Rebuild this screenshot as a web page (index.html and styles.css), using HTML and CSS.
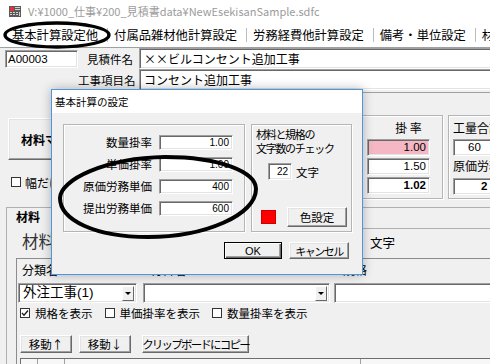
FILE: index.html
```html
<!DOCTYPE html>
<html lang="ja">
<head>
<meta charset="utf-8">
<title>NewEsekisanSample</title>
<link rel="stylesheet" href="styles.css">
</head>
<body>
<div class="titlebar">
  <svg class="appicon" width="12" height="11" viewBox="0 0 12 11">
    <rect x="0" y="0" width="12" height="11" fill="#5a5a5a"/>
    <rect x="1" y="1" width="4" height="4" fill="#e8303a"/>
    <rect x="6" y="1" width="5" height="1" fill="#d0d0d0"/>
    <rect x="6" y="3" width="5" height="1" fill="#d0d0d0"/>
    <rect x="1" y="6" width="2" height="1" fill="#d0d0d0"/>
    <rect x="4" y="6" width="2" height="1" fill="#d0d0d0"/>
    <rect x="7" y="6" width="2" height="1" fill="#d0d0d0"/>
    <rect x="1" y="8" width="2" height="1" fill="#d0d0d0"/>
    <rect x="4" y="8" width="2" height="1" fill="#d0d0d0"/>
    <rect x="7" y="8" width="2" height="1" fill="#d0d0d0"/>
    <rect x="10" y="6" width="1" height="4" fill="#d0d0d0"/>
  </svg>
  <span class="wtitle">V:¥1000_仕事¥200_見積書data¥NewEsekisanSample.sdfc</span>
</div>

<div class="menu">
  <span class="mi">基本計算設定他</span><span class="sep"></span>
  <span class="mi">付属品雑材他計算設定</span><span class="sep"></span>
  <span class="mi">労務経費他計算設定</span><span class="sep"></span>
  <span class="mi">備考・単位設定</span><span class="sep"></span>
  <span class="mi">材料</span>
</div>

<div class="hdr">
  <div class="hrow">
    <div class="tb code">A00003</div>
    <span class="hlbl">見積件名</span>
    <div class="tb wide">××ビルコンセント追加工事</div>
  </div>
  <div class="hrow">
    <div class="code-sp"></div>
    <span class="hlbl">工事項目名</span>
    <div class="tb wide">コンセント追加工事</div>
  </div>
</div>

<div class="top">
  <div class="leftcol">
    <div class="b3d bigbtn">材料マスタ編集</div>
    <div class="chkrow"><span class="cb"></span>幅だけ表示</div>
  </div>
  <div class="frame">
    <div class="grp rate">
      <div class="gtitle">掛 率</div>
      <div class="tb rval first pink">1.00</div>
      <div class="tb rval">1.50</div>
      <div class="tb rval bold">1.02</div>
    </div>
    <div class="grp labor">
      <div class="gtitle">工量合計</div>
      <div class="tb lval first">60</div>
      <div class="lcap">原価労務単価</div>
      <div class="tb lval bold lv2">2</div>
    </div>
  </div>
</div>

<div class="matpanel">
  <div class="mattitle">材料</div>
  <div class="matrow">
    <span class="biglbl">材料</span>
    <div class="charbox">文字</div>
  </div>
  <div class="listbox">
    <div class="colhdr"><span class="h1">分類名</span><span class="h2">材料名</span><span class="h3">規格</span></div>
    <div class="combos">
      <div class="tb combo c1"><span class="ctext">外注工事(1)</span><span class="arrow"></span></div>
      <div class="tb combo c2"><span class="arrow"></span></div>
      <div class="tb c3"></div>
    </div>
    <div class="checks">
      <span class="ck"><span class="cb on"><svg width="8" height="8" viewBox="0 0 8 8"><path d="M1 4 L3 6.2 L7 1.5" fill="none" stroke="#222" stroke-width="1.4"/></svg></span>規格を表示</span>
      <span class="ck"><span class="cb"></span>単価掛率を表示</span>
      <span class="ck"><span class="cb"></span>数量掛率を表示</span>
    </div>
    <div class="btns">
      <div class="b3d mv1">移動↑</div>
      <div class="b3d mv2">移動↓</div>
      <div class="b3d clip">クリップボードにコピー</div>
    </div>
    <div class="grid"><span class="gc g1"></span><span class="gc g2"></span><span class="gc g3"></span><span class="gc g4"></span></div>
  </div>
</div>

<div class="dlg">
  <div class="dtitle">基本計算の設定</div>
  <div class="dbody">
    <div class="dgroups">
      <div class="grp dg1">
        <span class="dl">数量掛率</span><div class="tb dv">1.00</div>
        <span class="dl">単価掛率</span><div class="tb dv">1.00</div>
        <span class="dl">原価労務単価</span><div class="tb dv">400</div>
        <span class="dl">提出労務単価</span><div class="tb dv">600</div>
      </div>
      <div class="grp dg2">
        <div class="chkcap"><span class="capline">材料と規格の</span><span class="capline">文字数のチェック</span></div>
        <div class="lenrow"><div class="tb lenv">22</div><span class="lenlbl">文字</span></div>
        <div class="colrow"><span class="swatch"></span><div class="b3d colbtn">色設定</div></div>
      </div>
    </div>
    <div class="dbtns">
      <div class="b3d def okb">OK</div>
      <div class="b3d canb">キャンセル</div>
    </div>
  </div>
</div>

<svg class="marks" width="490" height="364" viewBox="0 0 490 364">
  <ellipse cx="57" cy="35" rx="52" ry="12" fill="none" stroke="#000" stroke-width="3.3"/>
  <path d="M60,198 C60,180 105,158 165,157 C220,157 256,172 256,189 C256,215 205,237 148,237 C95,237 60,220 60,198 Z" fill="none" stroke="#000" stroke-width="4"/>
</svg>
</body>
</html>
```

FILE: styles.css
```css
* { box-sizing: border-box; }
html, body { margin: 0; padding: 0; }
body {
  width: 490px;
  height: 364px;
  overflow: hidden;
  position: relative;
  background: #f0f0f0;
  font-family: "Noto Sans CJK JP", sans-serif;
  font-size: 12px;
  color: #000;
}

/* window title */
.titlebar {
  height: 22px;
  background: #fff;
  display: flex;
  align-items: center;
  padding-left: 9px;
}
.appicon { flex: none; }
.wtitle {
  margin-left: 7px;
  font-size: 11px;
  color: #9b9b9b;
  white-space: nowrap;
}

/* menu strip */
.menu {
  height: 26px;
  background: #fff;
  border-bottom: 1px solid #a0a0a0;
  display: flex;
  align-items: center;
  padding-left: 12px;
  white-space: nowrap;
  font-size: 12.3px;
}
.sep {
  flex: none;
  width: 1px;
  height: 14px;
  background: #bcbcbc;
  margin: 0 6px 0 9px;
}

/* sunken text box */
.tb {
  background: #fff;
  border: 1px solid;
  border-color: #a0a0a0 #fff #fff #a0a0a0;
  box-shadow: inset 1px 1px #696969, inset -1px -1px #e3e3e3;
  white-space: nowrap;
  overflow: hidden;
}

/* raised classic button */
.b3d {
  background: #f0f0f0;
  border: 1px solid;
  border-color: #fff #696969 #696969 #fff;
  box-shadow: inset -1px -1px #a0a0a0, inset 1px 1px #e3e3e3;
  display: flex;
  align-items: center;
  justify-content: center;
  white-space: nowrap;
  font-size: 11.5px;
}
.def {
  border-color: #000;
  box-shadow: inset 1px 1px #fff, inset -1px -1px #696969, inset -2px -2px #a0a0a0;
}

/* header fields */
.hrow { display: flex; align-items: center; height: 21px; }
.code {
  width: 73px;
  height: 18px;
  margin-left: 5px;
  font-family: "Liberation Sans", sans-serif;
  font-size: 11.5px;
  line-height: 16px;
  padding-left: 2px;
}
.code-sp { width: 73px; margin-left: 5px; flex: none; }
.hlbl {
  width: 55px;
  flex: none;
  text-align: right;
  font-size: 11.5px;
  margin-right: 6px;
  white-space: nowrap;
}
.wide {
  flex: 1;
  height: 21px;
  margin-right: -20px;
  font-size: 12px;
  line-height: 19px;
  padding-left: 4px;
}

/* upper area */
.top { display: flex; height: 110px; }
.leftcol { width: 140px; flex: none; padding: 28px 0 0 8px; }
.bigbtn {
  width: 130px;
  height: 42px;
  font-weight: bold;
  font-size: 12px;
  justify-content: flex-start;
  padding-left: 12px;
}
.chkrow {
  display: flex;
  align-items: center;
  gap: 4px;
  margin: 17px 0 0 3px;
  height: 10px;
  font-size: 12px;
  white-space: nowrap;
}
.cb {
  width: 10px;
  height: 10px;
  flex: none;
  background: #fff;
  border: 1px solid #333;
  display: flex;
  align-items: center;
  justify-content: center;
}

.frame {
  flex: 1;
  min-width: 0;
  margin-top: 2px;
  border-top: 1px solid #a0a0a0;
  padding-top: 22px;
  display: flex;
  align-items: flex-start;
}
.grp {
  border: 1px solid #b5b5b5;
  box-shadow: inset 1px 1px #fff, 1px 1px #fff;
}
.gtitle { font-size: 12px; line-height: 14px; white-space: nowrap; }
.rate {
  flex: none;
  width: 85px;
  height: 84px;
  margin-left: 218px;
  padding: 5px 0 0 8px;
}
.rate .gtitle { text-align: center; padding-left: 8px; }
.rval {
  width: 63px;
  height: 17px;
  margin-top: 2px;
  text-align: right;
  padding-right: 3px;
  font-family: "Liberation Sans", sans-serif;
  font-size: 11.5px;
  line-height: 15px;
}
.first { margin-top: 4px; }
.pink { background: #f5b7c3; }
.bold { font-weight: bold; }
.labor {
  flex: none;
  width: 70px;
  height: 84px;
  margin-left: 5px;
  padding: 5px 0 0 4px;
}
.lval {
  width: 70px;
  height: 17px;
  padding-left: 14px;
  font-family: "Liberation Sans", sans-serif;
  font-size: 11.5px;
  line-height: 15px;
}
.lval.first { margin-top: 4px; }
.lv2 { padding-left: 27px; }
.lcap { font-size: 12px; line-height: 16px; margin: 2px 0 4px; white-space: nowrap; }

/* material panel */
.matpanel {
  margin: 7px 0 0 6px;
  border-top: 1px solid #b0b0b0;
  border-left: 1px solid #b0b0b0;
  padding-left: 9px;
  height: 200px;
}
.mattitle { font-weight: bold; font-size: 12px; line-height: 14px; margin-top: 2px; }
.matrow { display: flex; height: 34px; }
.biglbl {
  flex: none;
  width: 148px;
  margin-left: 6px;
  font-size: 16.5px;
  line-height: 34px;
  color: #333;
}
.charbox {
  flex: 1;
  margin-top: 4px;
  border-top: 1px solid #b0b0b0;
  padding-left: 200px;
  font-size: 12.5px;
  line-height: 28px;
  white-space: nowrap;
}
.listbox {
  border-top: 1px solid #8c8c8c;
  border-left: 1px solid #8c8c8c;
  height: 120px;
}
.colhdr {
  display: flex;
  height: 24px;
  padding: 2px 0 0 5px;
  font-size: 12px;
  line-height: 18px;
  white-space: nowrap;
}
.h1 { width: 128px; flex: none; }
.h2 { width: 193px; flex: none; }
.combos { display: flex; height: 20px; }
.combo { height: 20px; display: flex; align-items: center; flex: none; }
.c1 {
  width: 119px;
  margin-left: 1px;
  padding-left: 4px;
  font-family: "Liberation Sans", "Noto Sans CJK JP", sans-serif;
  font-size: 13.5px;
}
.c2 { width: 187px; margin-left: 6px; }
.c3 { flex: 1; height: 20px; margin-left: 4px; margin-right: -20px; }
.ctext { line-height: 18px; }
.arrow {
  margin-left: auto;
  margin-right: 2px;
  width: 12px;
  height: 15px;
  flex: none;
  background: #f0f0f0;
  border: 1px solid;
  border-color: #fff #696969 #696969 #fff;
  display: flex;
  align-items: center;
  justify-content: center;
}
.arrow::after {
  content: "";
  border-left: 3px solid transparent;
  border-right: 3px solid transparent;
  border-top: 3px solid #000;
}
.checks {
  display: flex;
  align-items: center;
  height: 12px;
  margin-top: 4px;
  padding-left: 3px;
  font-size: 11.5px;
  white-space: nowrap;
}
.ck { display: flex; align-items: center; gap: 5px; margin-right: 12px; }
.btns { display: flex; height: 18px; margin-top: 16px; padding-left: 3px; }
.btns .b3d { height: 18px; flex: none; font-size: 11.5px; }
.mv1 { width: 52px; }
.mv2 { width: 52px; margin-left: 7px; }
.clip { width: 107px; margin-left: 11px; font-size: 11px; letter-spacing: -1.8px; }
.grid {
  display: flex;
  margin: 5px 0 0 3px;
  height: 20px;
  border-top: 1px solid #6e6e6e;
  border-left: 1px solid #6e6e6e;
  background: #f7f7f7;
}
.gc { border-right: 1px solid #a0a0a0; flex: none; }
.g1 { width: 17px; }
.g2 { width: 27px; }
.g3 { width: 296px; }
.g4 { flex: 1; border-right: 0; }

/* dialog */
.dlg {
  position: absolute;
  left: 51px;
  top: 89px;
  width: 312px;
  height: 186px;
  border: 1px solid #4f97dc;
  background: #f0f0f0;
  box-shadow: 0 0 10px rgba(0, 0, 0, 0.28);
}
.dtitle {
  height: 23px;
  background: #fff;
  font-size: 10.5px;
  line-height: 23px;
  padding-left: 3px;
}
.dbody { padding: 11px 0 0 11px; }
.dgroups { display: flex; gap: 6px; }
.dg1 {
  width: 182px;
  height: 108px;
  display: grid;
  grid-template-columns: 1fr 74px;
  grid-auto-rows: 15px;
  column-gap: 7px;
  row-gap: 7px;
  padding: 10px 11px 0 0;
}
.dl {
  text-align: right;
  font-size: 11.5px;
  line-height: 15px;
  white-space: nowrap;
}
.dv {
  height: 15px;
  text-align: right;
  padding-right: 3px;
  font-family: "Liberation Sans", sans-serif;
  font-size: 10px;
  line-height: 13px;
}
.dg2 { width: 101px; height: 108px; padding: 2px 0 0 4px; }
.chkcap {
  font-size: 11px;
  letter-spacing: -1.3px;
  white-space: nowrap;
}
.capline { display: block; height: 14px; line-height: 14px; }
.lenrow { display: flex; align-items: center; height: 17px; margin: 8px 0 0 12px; }
.lenv {
  width: 24px;
  height: 17px;
  text-align: right;
  padding-right: 3px;
  font-family: "Liberation Sans", sans-serif;
  font-size: 10px;
  line-height: 15px;
}
.lenlbl { margin-left: 4px; font-size: 11.5px; }
.colrow { display: flex; align-items: center; height: 20px; margin: 27px 0 0 5px; }
.swatch { width: 15px; height: 14px; background: #f00; border: 1px solid #c80000; flex: none; }
.colbtn { width: 60px; height: 20px; margin-left: 11px; }
.dbtns {
  display: flex;
  justify-content: flex-end;
  gap: 7px;
  margin-top: 10px;
  padding-right: 13px;
}
.dbtns .b3d { height: 17px; }
.okb { width: 58px; font-family: "Liberation Sans", sans-serif; font-size: 11px; }
.canb { width: 60px; font-size: 11px; letter-spacing: -1.5px; }

/* annotation marks */
.marks { position: absolute; left: 0; top: 0; pointer-events: none; }
```
